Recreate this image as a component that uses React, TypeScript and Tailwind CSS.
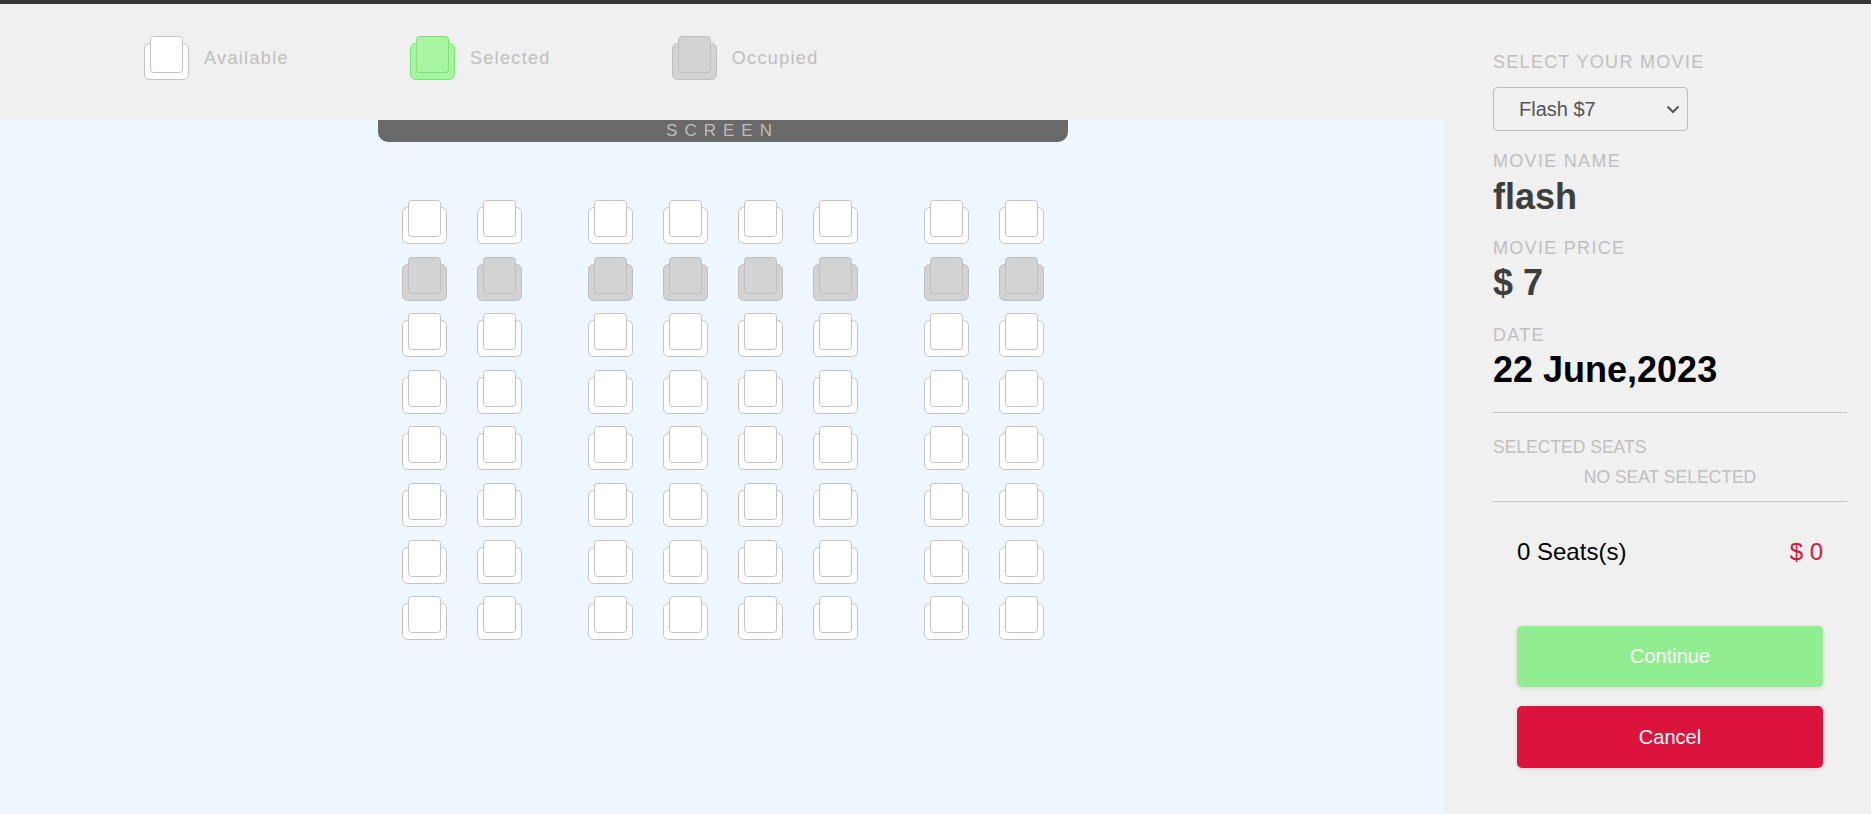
import React from "react";

type SeatKind = "available" | "selected" | "occupied";

const seatColors: Record<SeatKind, { fill: string; stroke: string }> = {
  available: { fill: "#ffffff", stroke: "#c4c4c4" },
  selected: { fill: "#a7f4a1", stroke: "#7ce27a" },
  occupied: { fill: "#d3d3d3", stroke: "#bfbfbf" },
};

function Seat({ kind }: { kind: SeatKind }) {
  const c = seatColors[kind];
  return (
    <svg width="45" height="44" viewBox="0 0 45 44" className="block shrink-0">
      <rect x="0.5" y="7.5" width="44" height="36" rx="5" fill={c.fill} stroke={c.stroke} />
      <rect x="6.5" y="0.5" width="32" height="36" rx="3" fill={c.fill} stroke={c.stroke} />
    </svg>
  );
}

function Legend() {
  const items: { kind: SeatKind; label: string }[] = [
    { kind: "available", label: "Available" },
    { kind: "selected", label: "Selected" },
    { kind: "occupied", label: "Occupied" },
  ];
  return (
    <div className="h-[116px] bg-[#f0f0f0] pt-[32px] pl-[144px] flex gap-[121px] items-start">
      {items.map((it) => (
        <div key={it.label} className="flex items-center gap-[15px]">
          <Seat kind={it.kind} />
          <span className="text-[18px] leading-[22px] tracking-[1.35px] text-[#bfbfbf]">{it.label}</span>
        </div>
      ))}
    </div>
  );
}

const groups = [2, 4, 2];
const rows = 8;

function SeatMap() {
  return (
    <div className="mt-[58px] flex flex-col items-center gap-y-[12.6px]">
      {Array.from({ length: rows }).map((_, r) => (
        <div key={r} className="flex gap-[66px]">
          {groups.map((n, g) => (
            <div key={g} className="flex gap-[30px]">
              {Array.from({ length: n }).map((_, i) => (
                <Seat key={i} kind={r === 1 ? "occupied" : "available"} />
              ))}
            </div>
          ))}
        </div>
      ))}
    </div>
  );
}

function Label({ children, className = "" }: { children: React.ReactNode; className?: string }) {
  return (
    <div className={"text-[18px] leading-[22px] tracking-[1.3px] text-[#bfbfbf] " + className}>{children}</div>
  );
}

function Sidebar() {
  return (
    <aside className="flex-1 bg-[#f0f0f0] pl-[48px] pr-[24px] pt-[47px] flex flex-col">
      <Label>SELECT YOUR MOVIE</Label>
      <div className="relative mt-[14px] w-[195px] h-[44px]">
        <select
          defaultValue="flash"
          className="appearance-none w-full h-full bg-transparent border border-[#bdbdbd] rounded-[4px] pl-[25px] text-[20px] text-[#555] outline-none"
        >
          <option value="flash">Flash $7</option>
        </select>
        <svg
          width="14"
          height="9"
          viewBox="0 0 14 9"
          className="absolute right-[8px] top-[18px] pointer-events-none"
        >
          <polyline points="1.5,1.5 7,7 12.5,1.5" fill="none" stroke="#555" strokeWidth="2" />
        </svg>
      </div>

      <Label className="mt-[19px]">MOVIE NAME</Label>
      <div className="mt-[4.5px] text-[36px] leading-[40px] font-bold text-[#3e3e3e]">flash</div>

      <Label className="mt-[20.3px]">MOVIE PRICE</Label>
      <div className="mt-[4.7px] text-[36px] leading-[40px] font-bold text-[#3e3e3e]">$ 7</div>

      <Label className="mt-[20.3px]">DATE</Label>
      <div className="mt-[4.7px] text-[36px] leading-[40px] font-bold text-black">22 June,2023</div>

      <div className="mt-[21.5px] border-t border-[#c4c4c4]" />

      <div className="mt-[23px] text-[17.5px] leading-[22px] text-[#bfbfbf]">SELECTED SEATS</div>
      <div className="mt-[8px] text-[17.5px] leading-[22px] text-[#bfbfbf] text-center">NO SEAT SELECTED</div>

      <div className="mt-[13px] border-t border-[#c4c4c4]" />

      <div className="mt-[35.7px] px-[24px] flex justify-between text-[24px] leading-[28px]">
        <span className="text-black">0 Seats(s)</span>
        <span className="text-[#dc143c]">$ 0</span>
      </div>

      <div className="px-[24px] flex flex-col">
        <button className="mt-[60px] h-[61px] rounded-[5px] bg-[#90ee90] text-white text-[20px] shadow-[0_1px_5px_rgba(0,0,0,0.12)]">
          Continue
        </button>
        <button className="mt-[19px] h-[62px] rounded-[5px] bg-[#dc143c] text-white text-[20px] shadow-[0_1px_5px_rgba(0,0,0,0.12)]">
          Cancel
        </button>
      </div>
    </aside>
  );
}

export default function App() {
  return (
    <div className="flex flex-col h-[814px] font-['Liberation_Sans',Arial,sans-serif]">
      <div className="h-[4px] bg-[#363636]" />
      <div className="flex flex-1">
        <main className="w-[1445px] flex flex-col bg-[#eef6fe]">
          <Legend />
          <div className="mx-auto w-[690px] h-[22px] bg-[#696969] rounded-b-[10px] text-center text-[17px] leading-[22px] tracking-[7px] text-[#bdbdbd]">
            SCREEN
          </div>
          <SeatMap />
        </main>
        <Sidebar />
      </div>
    </div>
  );
}
